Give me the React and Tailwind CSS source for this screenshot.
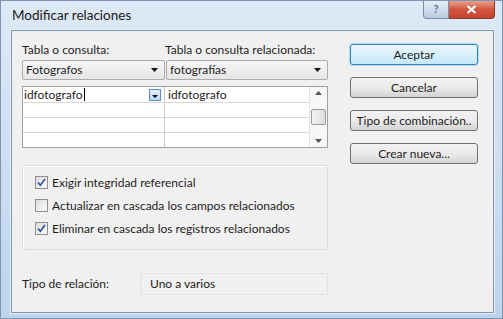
import React from 'react';

const FONT = { fontFamily: 'Lato, "Noto Sans", "Liberation Sans", sans-serif' };

function Combo({ value, className }) {
  return (
    <div className={`flex h-[20px] items-center justify-between rounded-[2px] border border-[#acacac] bg-gradient-to-b from-[#f6f6f6] to-[#e6e6e6] pl-[3px] pr-[6px] ${className}`}>
      <span>{value}</span>
      <svg width="7" height="4" viewBox="0 0 7 4"><path d="M0 0h7L3.5 4z" fill="#111" /></svg>
    </div>
  );
}

function Button({ children, focused }) {
  return (
    <div
      className={`flex h-[21px] items-center justify-center rounded-[3px] border bg-gradient-to-b ${
        focused
          ? 'border-[#3c7fb1] from-[#eaf6fd] to-[#c6e9fc] shadow-[0_0_0_1px_#a9dbf6]'
          : 'border-[#707070] from-[#f2f2f2] via-[#ebebeb] to-[#d3d3d3]'
      }`}
    >
      {children}
    </div>
  );
}

function Check({ checked, label }) {
  return (
    <div className="flex h-[15px] items-center gap-[4px]">
      <div className="flex h-[13px] w-[13px] items-center justify-center border border-[#8f8f8f] bg-gradient-to-br from-[#dcdcdc] to-[#fbfbfb]">
        {checked && (
          <svg width="9" height="9" viewBox="0 0 9 9">
            <path d="M1 4.5l2.3 2.7L8 1" fill="none" stroke="#2a4f9a" strokeWidth="1.6" />
          </svg>
        )}
      </div>
      <span>{label}</span>
    </div>
  );
}

export default function App() {
  const rows = [0, 1];
  return (
    <div
      style={FONT}
      className="flex h-[319px] w-[503px] flex-col border border-[#7d96b2] bg-gradient-to-b from-[#dde9f6] via-[#cddef1] to-[#bdd4ec] text-[12px] text-[#1e1e1e]"
    >
      <div className="flex h-[29px] items-start justify-between">
        <div className="pl-[11px] pt-[4px] text-[13.5px] text-[#1a1a1a]">Modificar relaciones</div>
        <div className="mr-[7px] flex">
          <div className="flex h-[18px] w-[26px] items-center justify-center rounded-bl-[4px] border border-t-0 border-[#7a8ea6] bg-gradient-to-b from-[#e6eef7] to-[#b9cbe0] text-[11px] font-bold text-[#5d6f86]">
            ?
          </div>
          <div className="flex h-[18px] w-[46px] items-center justify-center rounded-br-[4px] border border-l-0 border-t-0 border-[#8a3b32] bg-gradient-to-b from-[#e7a08f] via-[#d2543f] to-[#c7432d]">
            <svg width="11" height="9" viewBox="0 0 11 9">
              <path d="M1.5 1l8 7M9.5 1l-8 7" stroke="#fff" strokeWidth="2.2" />
            </svg>
          </div>
        </div>
      </div>

      <div className="mb-[5px] ml-[10px] mr-[8px] flex flex-1 border border-[#8094ac] bg-[#f0f0f0] pl-[10px] pt-[10px] shadow-[0_0_0_1px_#e6eef7]">
        <div className="flex w-[306px] flex-col">
          <div className="flex h-[15px]">
            <span className="w-[143px]">Tabla o consulta:</span>
            <span>Tabla o consulta relacionada:</span>
          </div>
          <div className="mt-[4px] flex">
            <Combo value="Fotografos" className="w-[143px]" />
            <Combo value="fotografías" className="ml-[1px] w-[162px]" />
          </div>
          <div className="mt-[6px] flex h-[62px] border border-[#a0a0a0] bg-white">
            <div className="flex w-[142px] flex-col border-r border-[#c8c8c8]">
              <div className="flex h-[16px] items-center justify-between border-b border-[#d6d6d6] pl-[1px] pr-[3px]">
                <span className="flex items-center">
                  idfotografo<span className="ml-[1px] inline-block h-[13px] w-[1px] bg-black" />
                </span>
                <span className="flex h-[12px] w-[12px] items-end justify-center border border-[#5b8fc4] bg-gradient-to-b from-[#e4f1fb] to-[#b7d8f3] pb-[2px]">
                  <svg width="6" height="3" viewBox="0 0 6 3"><path d="M0 0h6L3 3z" fill="#111" /></svg>
                </span>
              </div>
              {rows.map((r) => (
                <div key={r} className="h-[15px] border-b border-[#d6d6d6]" />
              ))}
            </div>
            <div className="flex flex-1 flex-col">
              <div className="flex h-[16px] items-center border-b border-[#d6d6d6] pl-[3px]">idfotografo</div>
              {rows.map((r) => (
                <div key={r} className="h-[15px] border-b border-[#d6d6d6]" />
              ))}
            </div>
            <div className="flex w-[18px] flex-col items-center justify-between border-l border-[#e2e2e2] bg-[#f7f7f7] py-[4px]">
              <svg width="7" height="4" viewBox="0 0 7 4"><path d="M0 4h7L3.5 0z" fill="#555" /></svg>
              <div className="h-[16px] w-[15px] rounded-[2px] border border-[#9a9a9a] bg-gradient-to-r from-[#f3f3f3] to-[#dcdcdc]" />
              <svg width="7" height="4" viewBox="0 0 7 4"><path d="M0 0h7L3.5 4z" fill="#555" /></svg>
            </div>
          </div>
          <div className="mt-[17px] flex h-[85px] flex-col gap-[8px] rounded-[3px] border border-[#d5dfe5] pl-[12px] pt-[9px] shadow-[inset_1px_1px_0_#fff]">
            <Check checked label="Exigir integridad referencial" />
            <Check label="Actualizar en cascada los campos relacionados" />
            <Check checked label="Eliminar en cascada los registros relacionados" />
          </div>
          <div className="mt-[23px] flex h-[22px] items-center">
            <span className="w-[118px]">Tipo de relación:</span>
            <div className="flex h-[22px] flex-1 items-center rounded-[2px] border border-[#e2e2e2] pl-[9px]">
              Uno a varios
            </div>
          </div>
        </div>
        <div className="ml-[22px] mt-[3px] flex w-[128px] flex-col gap-[12px]">
          <Button focused>Aceptar</Button>
          <Button>Cancelar</Button>
          <Button>Tipo de combinación..</Button>
          <Button>Crear nueva...</Button>
        </div>
      </div>
    </div>
  );
}
